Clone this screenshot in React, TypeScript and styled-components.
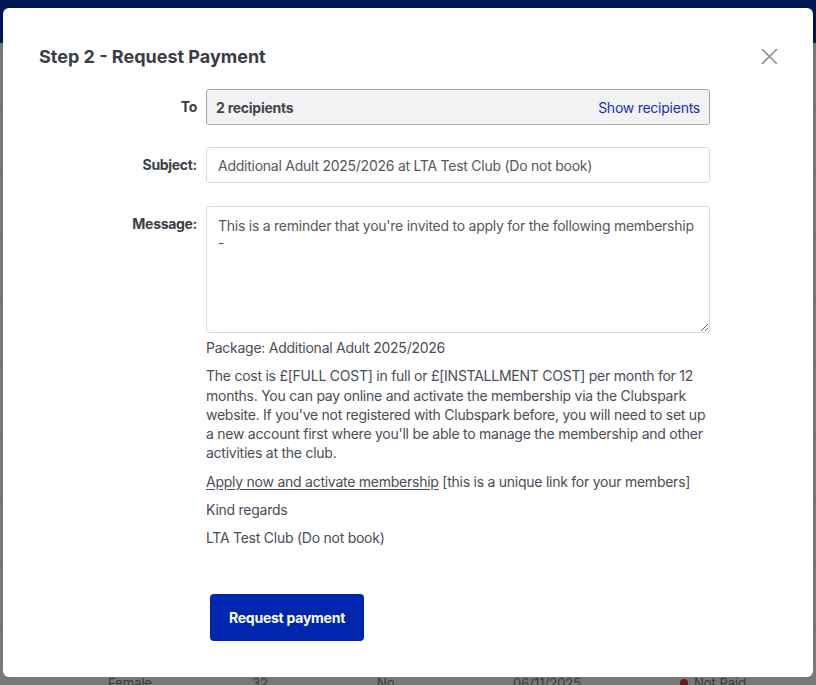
import React from "react";
import styled, { createGlobalStyle } from "styled-components";

const GlobalStyle = createGlobalStyle`
  html, body {
    margin: 0;
    padding: 0;
    height: 100%;
    overflow: hidden;
  }
  body {
    font-family: Inter, "Noto Sans", "Liberation Sans", sans-serif;
    background: #787878;
  }
  * {
    box-sizing: border-box;
  }
`;

// dimmed page behind the dialog
const Page = styled.div`
  height: 685px;
  overflow: hidden;
  display: flex;
  flex-direction: column;
`;

const Header = styled.div`
  flex: none;
  height: 43px;
  background: #001655;
`;

const Row = styled.div`
  flex: none;
  height: 65px;
  border-bottom: 1px solid #707070;
  display: grid;
  grid-template-columns: 144px 125px 136px 167px 1fr;
  align-items: end;
  padding: 0 0 1px 108px;
  font-size: 13px;
  line-height: 16px;
  color: #383838;
`;

const Status = styled.span`
  display: flex;
  align-items: center;
  gap: 6px;
  &::before {
    content: "";
    width: 8px;
    height: 8px;
    border-radius: 50%;
    background: #6a1a14;
  }
`;

const Overlay = styled.div`
  position: fixed;
  inset: 0;
  display: flex;
  justify-content: center;
  align-items: flex-start;
  padding: 8px 3px;
`;

const Modal = styled.div`
  position: relative;
  width: 810px;
  background: #ffffff;
  border-radius: 6px;
  padding: 37px 36px 36px 36px;
  letter-spacing: -0.25px;
`;

const Title = styled.h2`
  margin: 0;
  font-size: 18px;
  line-height: 24px;
  font-weight: 700;
  letter-spacing: 0;
  color: #3b3e47;
`;

const CloseButton = styled.button`
  position: absolute;
  top: 39px;
  right: 34px;
  width: 19px;
  height: 19px;
  padding: 0;
  border: none;
  background: none;
  cursor: pointer;
  display: flex;
  align-items: center;
  justify-content: center;
`;

const Form = styled.div`
  margin-top: 20px;
  display: grid;
  grid-template-columns: 158px 504px;
  column-gap: 9px;
  align-items: start;
`;

const Label = styled.label<{ $gap?: number }>`
  text-align: right;
  padding-top: 9px;
  font-size: 14px;
  line-height: 18px;
  font-weight: 700;
  letter-spacing: -0.3px;
  color: #3b3e47;
  margin-bottom: ${(p) => p.$gap ?? 0}px;
`;

const Field = styled.div<{ $gap?: number }>`
  margin-bottom: ${(p) => p.$gap ?? 0}px;
`;

const Recipients = styled.div`
  height: 36px;
  display: flex;
  align-items: center;
  justify-content: space-between;
  padding: 0 9px;
  background: #f2f2f2;
  border: 1px solid #a9a9a9;
  border-radius: 3px;
  font-size: 14px;
`;

const RecipientCount = styled.span`
  font-weight: 700;
  color: #444750;
`;

const ShowLink = styled.a`
  color: #1233b8;
  text-decoration: none;
  cursor: pointer;
`;

const TextInput = styled.input`
  display: block;
  width: 100%;
  height: 36px;
  padding: 0 11px;
  border: 1px solid #dcdcdc;
  border-radius: 3px;
  font-family: inherit;
  font-size: 14px;
  letter-spacing: -0.25px;
  color: #555860;
  outline: none;
`;

const TextArea = styled.textarea`
  display: block;
  width: 100%;
  height: 127px;
  padding: 10px 6px 10px 11px;
  border: 1px solid #dcdcdc;
  border-radius: 3px;
  font-family: inherit;
  font-size: 14px;
  line-height: 17px;
  letter-spacing: -0.25px;
  color: #555860;
  resize: vertical;
  outline: none;
`;

const Preview = styled.div`
  grid-column: 2;
  margin-top: 5px;
  font-size: 14px;
  line-height: 19.25px;
  color: #4a4d56;
`;

const Para = styled.p`
  margin: 0 0 9px 0;
  &:last-child {
    margin-bottom: 0;
  }
`;

const Underlined = styled.a`
  color: inherit;
  text-decoration: underline;
  text-underline-offset: 2px;
`;

const Actions = styled.div`
  grid-column: 2;
  margin-top: 46.75px;
  padding-left: 4px;
`;

const PrimaryButton = styled.button`
  height: 47px;
  padding: 0 19px;
  border: none;
  border-radius: 4px;
  background: #0026b0;
  color: #ffffff;
  font-family: inherit;
  font-size: 14px;
  font-weight: 700;
  letter-spacing: -0.25px;
  cursor: pointer;
`;

const CloseIcon = () => (
  <svg width="17" height="17" viewBox="0 0 17 17" fill="none">
    <path d="M1.5 1.5 L15.5 15.5 M15.5 1.5 L1.5 15.5" stroke="#8c8c8c" strokeWidth="1.6" strokeLinecap="round" />
  </svg>
);

const emptyRows = 9;

export default function App() {
  return (
    <>
      <GlobalStyle />
      <Page>
        <Header />
        {Array.from({ length: emptyRows }).map((_, i) => (
          <Row key={i} />
        ))}
        <Row>
          <span>Female</span>
          <span>32</span>
          <span>No</span>
          <span>06/11/2025</span>
          <Status>Not Paid</Status>
        </Row>
      </Page>
      <Overlay>
        <Modal>
          <Title>Step 2 - Request Payment</Title>
          <CloseButton aria-label="Close">
            <CloseIcon />
          </CloseButton>
          <Form>
            <Label $gap={22}>To</Label>
            <Field $gap={22}>
              <Recipients>
                <RecipientCount>2 recipients</RecipientCount>
                <ShowLink>Show recipients</ShowLink>
              </Recipients>
            </Field>

            <Label $gap={23}>Subject:</Label>
            <Field $gap={23}>
              <TextInput defaultValue="Additional Adult 2025/2026 at LTA Test Club (Do not book)" />
            </Field>

            <Label>Message:</Label>
            <Field>
              <TextArea defaultValue={"This is a reminder that you're invited to apply for the following membership\n-"} />
            </Field>

            <Preview>
              <Para>Package: Additional Adult 2025/2026</Para>
              <Para>
                The cost is £[FULL COST] in full or £[INSTALLMENT COST] per month for 12 months. You can pay
                online and activate the membership via the Clubspark website. If you've not registered with
                Clubspark before, you will need to set up a new account first where you'll be able to manage the
                membership and other activities at the club.
              </Para>
              <Para>
                <Underlined>Apply now and activate membership</Underlined> [this is a unique link for your members]
              </Para>
              <Para>Kind regards</Para>
              <Para>LTA Test Club (Do not book)</Para>
            </Preview>

            <Actions>
              <PrimaryButton>Request payment</PrimaryButton>
            </Actions>
          </Form>
        </Modal>
      </Overlay>
    </>
  );
}
